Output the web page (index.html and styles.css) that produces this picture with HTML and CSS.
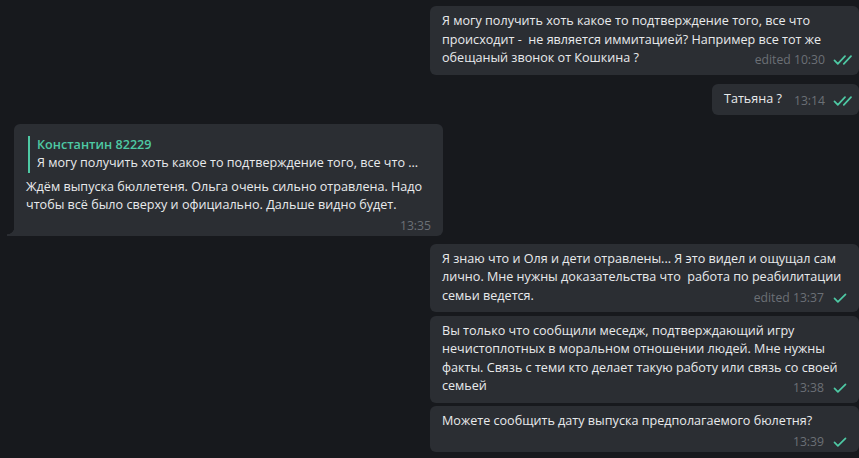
FILE: index.html
```html
<!DOCTYPE html>
<html lang="en">
  <head>
    <meta charset="UTF-8" />
    <meta name="viewport" content="width=device-width, initial-scale=1.0" />
    <title>Chat</title>
    <link rel="stylesheet" href="styles.css">
  </head>
  <body>
    <div class="history">
      <div class="msg out">
        <div class="bubble">
          Я могу получить хоть какое то подтверждение того, все что происходит -&nbsp; не является иммитацией? Например все тот же обещаный звонок от Кошкина ?
          <span class="meta">edited 10:30<svg class="check double" viewBox="0 0 19 10"><path d="M1.5 5.4l3.3 3.4L12 1.2M10.8 8.8L18 1.2" /></svg></span>
        </div>
      </div>

      <div class="msg out">
        <div class="bubble">
          Татьяна ?
          <span class="meta">13:14<svg class="check double" viewBox="0 0 19 10"><path d="M1.5 5.4l3.3 3.4L12 1.2M10.8 8.8L18 1.2" /></svg></span>
        </div>
      </div>

      <div class="msg in">
        <div class="bubble">
          <div class="reply">
            <div class="reply-name">Константин 82229</div>
            <div class="reply-text">Я могу получить хоть какое то подтверждение того, все что ...</div>
          </div>
          Ждём выпуска бюллетеня. Ольга очень сильно отравлена. Надо чтобы всё было сверху и официально. Дальше видно будет.
          <span class="meta">13:35</span>
        </div>
      </div>

      <div class="msg out">
        <div class="bubble">
          Я знаю что и Оля и дети отравлены... Я это видел и ощущал сам лично. Мне нужны доказательства что&nbsp; работа по реабилитации семьи ведется.
          <span class="meta">edited 13:37<svg class="check" viewBox="0 0 14 10"><path d="M1.5 5.4l3.4 3.4L12.5 1.3" /></svg></span>
        </div>
      </div>

      <div class="msg out grouped">
        <div class="bubble">
          Вы только что сообщили меседж, подтверждающий игру нечистоплотных в моральном отношении людей. Мне нужны факты. Связь с теми кто делает такую работу или связь со своей семьей
          <span class="meta">13:38<svg class="check" viewBox="0 0 14 10"><path d="M1.5 5.4l3.4 3.4L12.5 1.3" /></svg></span>
        </div>
      </div>

      <div class="msg out grouped">
        <div class="bubble">
          Можете сообщить дату выпуска предполагаемого бюлетня?
          <span class="meta">13:39<svg class="check" viewBox="0 0 14 10"><path d="M1.5 5.4l3.4 3.4L12.5 1.3" /></svg></span>
        </div>
      </div>
    </div>
  </body>
</html>
```

FILE: styles.css
```css
body {
  margin: 0;
  background-color: #17191d;
  font-family: "Open Sans", "Noto Sans", sans-serif;
  font-size: 12.6px;
  color: #e8eaec;
  overflow: hidden;
}
.history {
  display: flex;
  flex-direction: column;
  padding-top: 6px;
}
.msg {
  display: flex;
  margin-top: 9px;
}
.msg:first-child {
  margin-top: 0;
}
.msg.grouped {
  margin-top: 3.5px;
}
.msg.out {
  justify-content: flex-end;
}
.msg.in {
  justify-content: flex-start;
  margin-top: 8.5px;
  padding-left: 14px;
}
.msg.in + .msg {
  margin-top: 8px;
}
.bubble {
  position: relative;
  max-width: 405px;
  padding: 6px 12px 7px 12px;
  line-height: 18.5px;
  background-color: #2b2e33;
  border-radius: 6px;
}
.msg.in .bubble {
  border-bottom-left-radius: 0;
}
.msg.in .bubble::before {
  content: "";
  position: absolute;
  left: -7px;
  bottom: 0;
  width: 7px;
  height: 9px;
  background: radial-gradient(circle at 0 0, transparent 7px, #2b2e33 7.6px);
}
.meta {
  float: right;
  position: relative;
  top: 4px;
  margin-left: 12px;
  font-size: 12.2px;
  line-height: 14px;
  color: #6b7076;
  white-space: nowrap;
}
.check {
  width: 14px;
  height: 10px;
  margin-left: 9px;
  vertical-align: -1px;
  fill: none;
  stroke: #4ec9a4;
  stroke-width: 1.7;
  stroke-linecap: round;
  stroke-linejoin: round;
}
.check.double {
  width: 19px;
  margin-left: 8px;
  margin-right: -5px;
}
.reply {
  border-left: 2px solid #4ec9a4;
  padding-left: 7px;
  margin: 6px 0 5px 2px;
}
.reply-name {
  color: #4ec9a4;
  font-weight: 600;
}
.reply-text {
  white-space: nowrap;
}
```
